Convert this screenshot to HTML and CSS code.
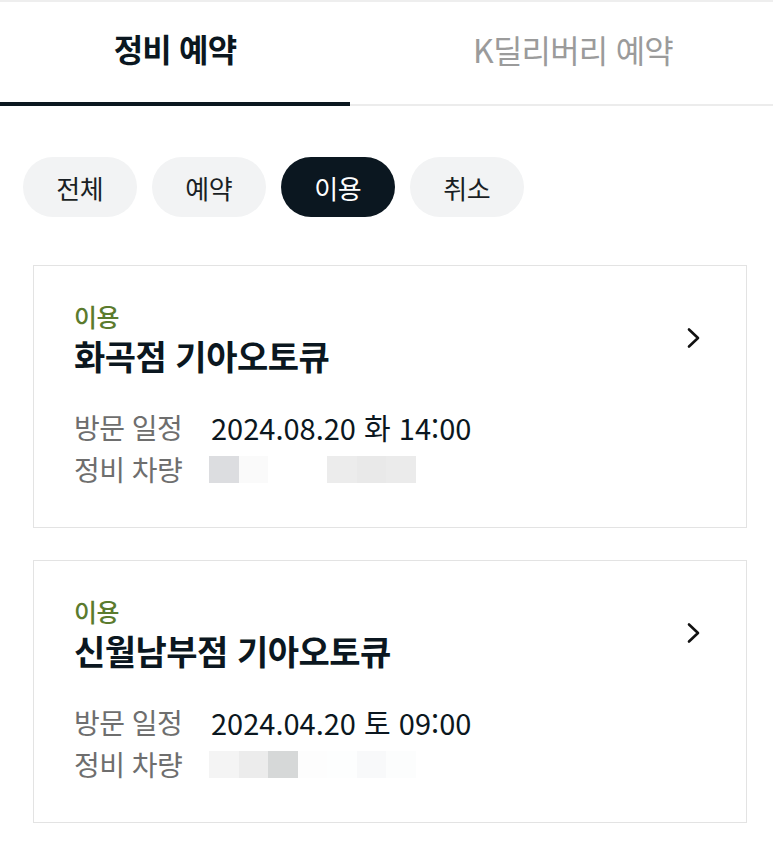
FILE: index.html
```html
<!DOCTYPE html>
<html lang="ko">
<head>
<meta charset="utf-8">
<link rel="stylesheet" href="styles.css">
</head>
<body>
<div class="tabs">
  <div class="tab active">정비 예약</div>
  <div class="tab">K딜리버리 예약</div>
</div>
<div class="chips">
  <div class="chip">전체</div>
  <div class="chip">예약</div>
  <div class="chip on">이용</div>
  <div class="chip">취소</div>
</div>
<div class="list">
  <div class="card">
    <div class="body">
      <div class="status">이용</div>
      <div class="title">화곡점 기아오토큐</div>
      <div class="row"><span class="label">방문 일정</span><span class="value">2024.08.20 화 14:00</span></div>
      <div class="row"><span class="label">정비 차량</span><span class="plate">
        <i class="px" style="background:#dcdde0"></i><i class="px" style="background:#fafafa"></i><i class="px" style="background:#fff"></i><i class="px" style="background:#fff"></i><i class="px" style="background:#ececec"></i><i class="px" style="background:#e9e9e9"></i><i class="px" style="background:#ebebeb"></i>
      </span></div>
    </div>
    <svg class="chev" width="24" height="24" viewBox="0 0 24 24"><polyline points="8,3.5 17,12 8,20.5" fill="none" stroke="#111" stroke-width="2.6" stroke-linecap="round" stroke-linejoin="round"/></svg>
  </div>
  <div class="card">
    <div class="body">
      <div class="status">이용</div>
      <div class="title">신월남부점 기아오토큐</div>
      <div class="row"><span class="label">방문 일정</span><span class="value">2024.04.20 토 09:00</span></div>
      <div class="row"><span class="label">정비 차량</span><span class="plate">
        <i class="px" style="background:#f4f4f4"></i><i class="px" style="background:#ececec"></i><i class="px" style="background:#d6d8d8"></i><i class="px" style="background:#fdfdfd"></i><i class="px" style="background:#fdfefe"></i><i class="px" style="background:#f8f9fa"></i><i class="px" style="background:#fcfdfd"></i>
      </span></div>
    </div>
    <svg class="chev" width="24" height="24" viewBox="0 0 24 24"><polyline points="8,3.5 17,12 8,20.5" fill="none" stroke="#111" stroke-width="2.6" stroke-linecap="round" stroke-linejoin="round"/></svg>
  </div>
</div>
</body>
</html>
```

FILE: styles.css
```css
html, body {
  margin: 0;
  padding: 0;
  background: #fff;
}
body {
  font-family: "Noto Sans CJK KR", "Noto Sans", sans-serif;
  color: #0b1720;
  border-top: 2px solid #eeeeee;
}
.tabs {
  display: flex;
  height: 102px;
  border-bottom: 2px solid #ececec;
}
.tab {
  flex: 0 0 auto;
  width: 350px;
  display: flex;
  align-items: center;
  justify-content: center;
  font-size: 32px;
  letter-spacing: -0.8px;
  color: #9b9b9b;
  padding-bottom: 8px;
  box-sizing: border-box;
}
.tab + .tab {
  flex: 1 1 auto;
  padding-left: 23px;
}
.tab.active {
  color: #0b1720;
  font-weight: 700;
  border-bottom: 4px solid #0b1720;
  margin-bottom: -2px;
}
.chips {
  display: flex;
  gap: 15.5px;
  padding: 51px 0 0 23px;
}
.chip {
  width: 113.5px;
  height: 60px;
  border-radius: 30px;
  background: #f2f3f4;
  display: flex;
  align-items: center;
  justify-content: center;
  font-size: 26px;
  letter-spacing: -0.5px;
  color: #1a1f24;
}
.chip.on {
  background: #0b1720;
  color: #fff;
}
.list {
  padding: 48px 26px 0 33px;
  display: flex;
  flex-direction: column;
  gap: 32px;
}
.card {
  border: 1px solid #e3e3e3;
  display: flex;
  justify-content: space-between;
  align-items: flex-start;
  padding: 34px 41px 37px 40px;
}
.status {
  color: #5b7b2e;
  font-size: 25px;
  font-weight: 500;
  line-height: 32px;
  letter-spacing: -0.5px;
}
.title {
  font-size: 34px;
  font-weight: 700;
  line-height: 44px;
  letter-spacing: -0.5px;
  margin-top: 2px;
  margin-bottom: 28px;
}
.row {
  display: flex;
  align-items: center;
  height: 42px;
}
.label {
  width: 137px;
  font-size: 28px;
  letter-spacing: -0.5px;
  color: #6e6e6e;
}
.value {
  font-size: 29px;
  letter-spacing: 0;
  color: #0b1720;
}
.plate {
  display: flex;
  margin-left: -2px;
}
.px {
  display: block;
  width: 29.5px;
  height: 27px;
}
.chev {
  margin-top: 26px;
}
```
